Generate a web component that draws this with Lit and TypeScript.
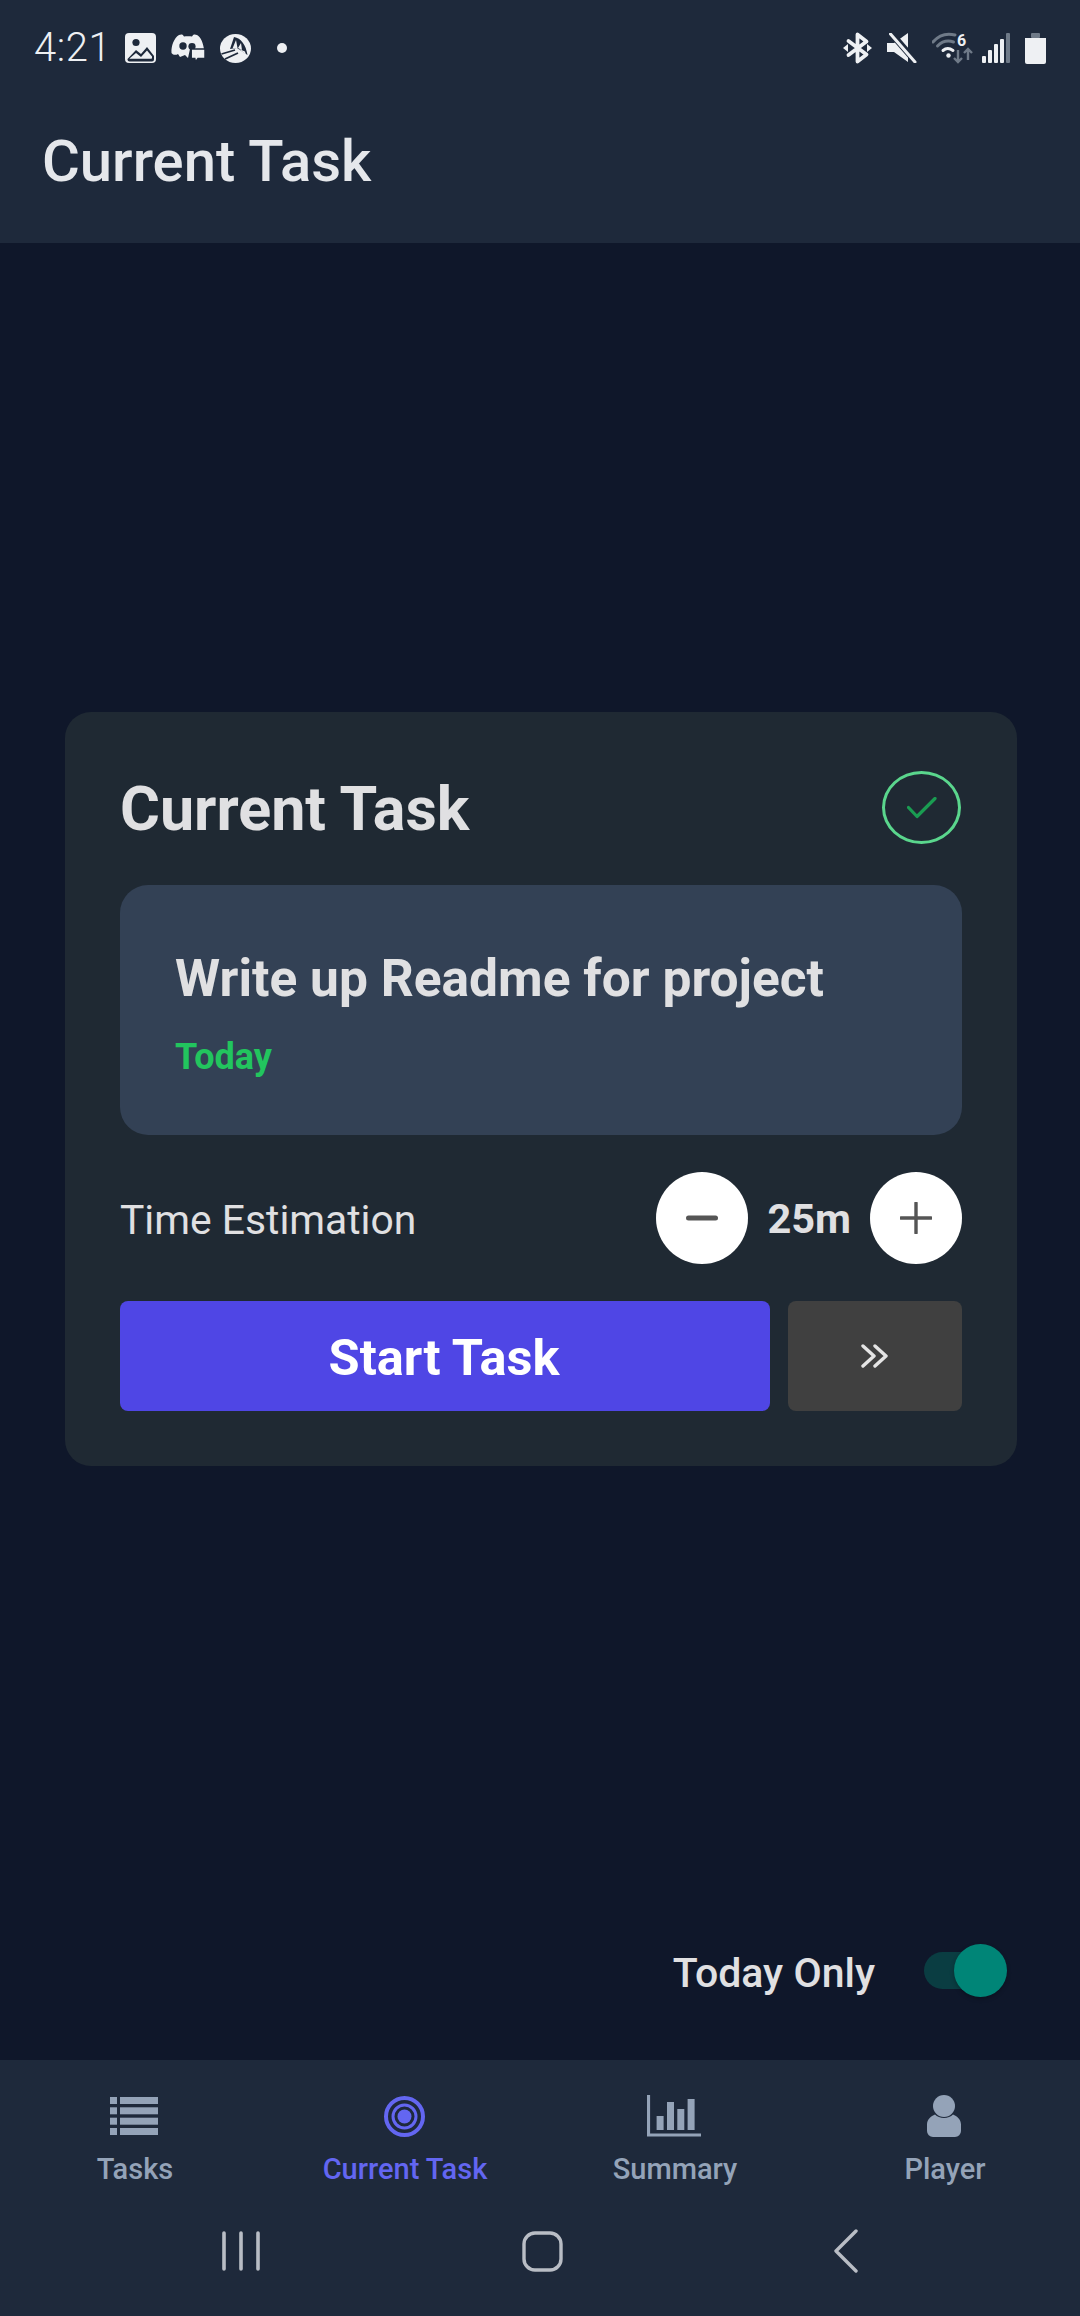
import { LitElement, html, css, svg } from "lit";
import { customElement } from "lit/decorators.js";

const icon = (w: number, h: number, body: unknown) =>
  html`<svg width=${w} height=${h} viewBox="0 0 ${w} ${h}" aria-hidden="true">${body}</svg>`;

const W = "#eef0f3";
const G = "#6f7a88";
const BG = "#1e293b";
const NAV = "#94a3b8";
const SYS = "#b9bdc5";

const ICONS = {
  image: icon(31, 30, svg`<rect width="31" height="30" rx="4" fill=${W}/><path d="M2.500 26 11 17l5 4 6-7 7 9v3.500a2 2 0 0 1-2 2H4.500a2 2 0 0 1-2-2Z" fill=${BG}/><path d="M4.500 25.500 11 20l5 4 6-6.500 5 6v1.500a.8.8 0 0 1-.8.8H5.300a.8.8 0 0 1-.8-.8Z" fill=${W}/><circle cx="11" cy="9.500" r="3.600" fill=${BG}/>`),
  discord: icon(34, 29, svg`<path d="M8 1c2-1 4-1 5 1.500 2-.5 6-.5 8 0C22 0 24 0 26 1c4 2 6 8 7 14H19l-2 9-3-3-5 2-2-3c-3 2-6 0-6.500-1C0 12 3 4 8 1Z" fill=${W}/><circle cx="12" cy="12" r="3.700" fill=${BG}/><ellipse cx="21" cy="12.500" rx="3.600" ry="3.400" fill=${BG}/><path d="M21 15h12.500a.8.8 0 0 1 .5.8v8a.8.8 0 0 1-.8.8H27l-2.500 3.400-.7-3.400H21a.8.8 0 0 1-.8-.8v-8a.8.8 0 0 1 .8-.8Z" fill=${W} stroke=${BG} stroke-width="1.500"/>`),
  sync: icon(31, 29, svg`<ellipse cx="15.500" cy="14.500" rx="15.500" ry="14.500" fill=${W}/><path d="M10 15 14 3C21 4 26 11 27.500 21L17 14Z" fill=${BG}/><path d="M12.500 14.500 16 6l1.500 8ZM18 14 21 9l1 7ZM19 15l6 2.500 .8 3Z" fill=${W}/><path d="M1.500 20 15 16M5 25l13-6" stroke=${BG} stroke-width="1.800"/>`),
  bluetooth: icon(29, 32, svg`<path d="M14.500 16V2.500l9 7L5.500 23M14.500 16v13.500l9-7L5.500 9" fill="none" stroke=${W} stroke-width="3.800" stroke-linejoin="round" stroke-linecap="round"/><path d="M0 16l5-4v8ZM29 16l-5-4v8Z" fill=${W}/>`),
  mute: icon(30, 30, svg`<path d="M0 10h7L21 0v29L7 19H0Z" fill=${W}/><path d="M3 -1 30 30" stroke=${BG} stroke-width="6.500"/><path d="M3.500 1 28 29" stroke=${W} stroke-width="3" stroke-linecap="round"/>`),
  wifi: icon(42, 32, svg`<path d="M1 10C7 3 15 1 23 3" fill="none" stroke=${G} stroke-width="3" stroke-linecap="round"/><path d="M5.500 14c4-4 10-6 16-4" fill="none" stroke=${G} stroke-width="3" stroke-linecap="round"/><path d="M11 18.500c3-2.500 6.500-2.500 10 0" fill="none" stroke=${W} stroke-width="3" stroke-linecap="round"/><circle cx="16.500" cy="23.500" r="2.200" fill=${W}/><text x="25" y="14" font-family="Roboto" font-weight="700" font-size="16" fill=${W}>6</text><path d="M26 18v12M22 26l4 4 4-4" fill="none" stroke=${G} stroke-width="2.400"/><path d="M36 28V17M32 21l4-4 4 4" fill="none" stroke=${G} stroke-width="2.400"/>`),
  signal: icon(28, 30, svg`<rect x="0" y="23" width="4" height="7" rx="1" fill=${W}/><rect x="6" y="17" width="4" height="13" rx="1" fill=${W}/><rect x="12" y="11" width="4" height="19" rx="1" fill=${W}/><rect x="18" y="6" width="4" height="24" rx="1" fill=${W}/><rect x="24" y="0" width="4" height="30" rx="1" fill=${G}/>`),
  battery: icon(21, 31, svg`<rect x="6" y="0" width="9" height="5" rx="1" fill=${G}/><path d="M0 5h21v24a2 2 0 0 1-2 2H2a2 2 0 0 1-2-2Z" fill=${W}/>`),
  check: icon(30, 22, svg`<path d="M1.500 10.500 10 19.500 28 1.500" fill="none" stroke="#1a9c52" stroke-width="3.200" stroke-linecap="round" stroke-linejoin="round"/>`),
  minus: icon(32, 6, svg`<rect width="32" height="5" y=".5" rx="2.500" fill="#555"/>`),
  plus: icon(32, 32, svg`<path d="M16 1v30M1 16h30" stroke="#555" stroke-width="3.400" stroke-linecap="round"/>`),
  skip: icon(28, 24, svg`<path d="M2 2l11 10L2 22M14 2l11 10-11 10" fill="none" stroke="#e5e5e5" stroke-width="3.400" stroke-linecap="round" stroke-linejoin="round"/>`),
  tasks: icon(48, 38, svg`${[0, 10.3, 20.7, 31].map((y) => svg`<rect x="0" y=${y} width="7" height="7" fill=${NAV}/><rect x="10" y=${y} width="38" height="7" fill=${NAV}/>`)}`),
  target: icon(41, 41, svg`<circle cx="20.500" cy="20.500" r="18.500" fill="none" stroke="#6366f1" stroke-width="4"/><circle cx="20.500" cy="20.500" r="7" fill="#6366f1"/><circle cx="20.500" cy="20.500" r="11.500" fill="none" stroke="#6366f1" stroke-width="3"/>`),
  summary: icon(54, 42, svg`<path d="M1.500 0v40H54" fill="none" stroke=${NAV} stroke-width="3.200"/><rect x="9.600" y="21" width="7" height="14" fill=${NAV}/><rect x="20" y="7" width="7" height="28" fill=${NAV}/><rect x="30.300" y="14" width="7" height="21" fill=${NAV}/><rect x="40.600" y="4" width="7" height="31" fill=${NAV}/>`),
  player: icon(34, 42, svg`<circle cx="17" cy="11" r="11" fill=${NAV}/><path d="M8 19.500c4 4.500 14 4.500 18 0 4 1.500 8 5 8 10V36a6 6 0 0 1-6 6H6a6 6 0 0 1-6-6v-6.500c0-5 4-8.500 8-10Z" fill=${NAV}/>`),
  recents: icon(38, 40, svg`<path d="M2 2v36M19 2v36M36 2v36" stroke=${SYS} stroke-width="3.600" stroke-linecap="round"/>`),
  home: icon(41, 41, svg`<rect x="2" y="2" width="37" height="37" rx="11" fill="none" stroke=${SYS} stroke-width="3.400"/>`),
  back: icon(24, 44, svg`<path d="M22 2 2 22l20 20" fill="none" stroke=${SYS} stroke-width="3.400" stroke-linecap="round" stroke-linejoin="round"/>`),
};

const NAV_ITEMS = [
  { label: "Tasks", icon: ICONS.tasks, active: false },
  { label: "Current Task", icon: ICONS.target, active: true },
  { label: "Summary", icon: ICONS.summary, active: false },
  { label: "Player", icon: ICONS.player, active: false },
];

@customElement("app-root")
export class AppRoot extends LitElement {
  static styles = css`
    :host {
      display: flex;
      flex-direction: column;
      width: 1080px;
      height: 2316px;
      background: #0f172a;
      color: #e0e0e2;
      font-family: Roboto, "Liberation Sans", sans-serif;
      overflow: hidden;
    }
    .top {
      height: 243px;
      flex: none;
      background: #1e293b;
      box-sizing: border-box;
    }
    .status {
      height: 96px;
      display: flex;
      align-items: center;
      justify-content: space-between;
      padding: 0 34px;
      box-sizing: border-box;
      color: #eef0f3;
    }
    .status .group { display: flex; align-items: center; }
    .time { font-size: 40px; font-weight: 300; letter-spacing: 0.6px; line-height: 44px; margin-right: 13.5px; }
    .sl1 { margin-right: 15px; }
    .sl2 { margin-right: 15px; }
    .dot { width: 10px; height: 10px; border-radius: 50%; background: #eef0f3; margin-left: 26px; }
    .sr1 { margin-right: 15px; }
    .sr2 { margin-right: 15px; }
    .sr3 { margin-right: 8px; }
    .sr4 { margin-right: 15px; }
    h1 {
      margin: 0;
      padding: 33px 0 0 42px;
      font-size: 58px;
      line-height: 64px;
      font-weight: 500;
      color: #e5e7eb;
    }
    .content {
      flex: 1;
      display: flex;
      align-items: center;
      justify-content: center;
      padding-left: 2px;
    }
    .card {
      width: 952px;
      box-sizing: border-box;
      background: #1f2933;
      border-radius: 26px;
      padding: 55px;
      display: flex;
      flex-direction: column;
      gap: 37px;
    }
    .card-head {
      height: 81px;
      display: flex;
      align-items: center;
      justify-content: space-between;
    }
    h2 { margin: 3px 0 0; font-size: 61px; line-height: 70px; font-weight: 700; color: #e0e0e2; }
    .done {
      width: 79px;
      height: 73px;
      margin-right: 1px;
      box-sizing: border-box;
      border: 3px solid #5ad68d;
      border-radius: 50%;
      display: flex;
      align-items: center;
      justify-content: center;
    }
    .task {
      height: 250px;
      box-sizing: border-box;
      background: #334155;
      border-radius: 28px;
      padding: 66px 55px 0;
    }
    .task-title { font-size: 51.5px; line-height: 56px; font-weight: 700; color: #e0e0e2; }
    .task-date { margin-top: 29px; font-size: 36px; line-height: 42px; font-weight: 700; color: #22c55e; }
    .time-row { display: flex; align-items: center; justify-content: space-between; height: 92px; }
    .time-label { margin-top: 4px; font-size: 40.8px; line-height: 48px; color: #e0e0e2; }
    .stepper { display: flex; align-items: center; gap: 19px; }
    .round {
      width: 92px;
      height: 92px;
      border-radius: 50%;
      background: #fff;
      display: flex;
      align-items: center;
      justify-content: center;
    }
    .amount { margin-top: 2px; font-size: 41.5px; line-height: 48px; font-weight: 700; color: #e0e0e2; }
    .actions { display: flex; gap: 18px; height: 110px; }
    .start {
      width: 650px;
      box-sizing: border-box;
      padding: 2px 2px 0 0;
      background: #4f46e5;
      border-radius: 8px;
      color: #fff;
      font-size: 50.5px;
      font-weight: 700;
      display: flex;
      align-items: center;
      justify-content: center;
    }
    .skip {
      flex: 1;
      background: #404040;
      border-radius: 8px;
      display: flex;
      align-items: center;
      justify-content: center;
    }
    .filter {
      height: 125px;
      flex: none;
      box-sizing: border-box;
      padding: 9px 73px 0 0;
      display: flex;
      justify-content: flex-end;
      align-items: flex-start;
      gap: 49px;
    }
    .filter-label { margin-top: 3px; font-size: 41px; line-height: 53px; font-weight: 500; color: #e0e0e2; }
    .switch { position: relative; width: 83px; height: 53px; }
    .track {
      position: absolute;
      left: 0;
      top: 8px;
      width: 76px;
      height: 37px;
      border-radius: 19px;
      background: #0a3d42;
    }
    .thumb {
      position: absolute;
      right: 0;
      top: 0;
      width: 53px;
      height: 53px;
      border-radius: 50%;
      background: #008577;
      box-shadow: 0 2px 4px rgba(0, 0, 0, 0.25);
    }
    .bottom {
      height: 256px;
      flex: none;
      background: #1e293b;
      box-sizing: border-box;
      padding-top: 35px;
    }
    .tabs { display: grid; grid-template-columns: repeat(4, 270px); }
    .tab { display: flex; flex-direction: column; align-items: center; color: #94a3b8; }
    .tab.active { color: #6366f1; }
    .tab-icon { height: 42px; display: flex; align-items: center; margin-right: 2px; }
    .tab-label { margin-top: 15px; font-size: 29px; line-height: 34px; font-weight: 500; white-space: nowrap; }
    .system {
      margin-top: 43px;
      display: grid;
      grid-template-columns: 222px 300px 312px 1fr;
      align-items: center;
      height: 44px;
    }
    .system svg { display: block; }
  `;

  render() {
    return html`
      <section class="top">
        <div class="status">
          <div class="group">
            <span class="time">4:21</span>
            <span class="group sl1">${ICONS.image}</span>
            <span class="group sl2">${ICONS.discord}</span>
            ${ICONS.sync}
            <span class="dot"></span>
          </div>
          <div class="group">
            <span class="group sr1">${ICONS.bluetooth}</span>
            <span class="group sr2">${ICONS.mute}</span>
            <span class="group sr3">${ICONS.wifi}</span>
            <span class="group sr4">${ICONS.signal}</span>
            ${ICONS.battery}
          </div>
        </div>
        <h1>Current Task</h1>
      </section>
      <main class="content">
        <article class="card">
          <header class="card-head">
            <h2>Current Task</h2>
            <div class="done">${ICONS.check}</div>
          </header>
          <div class="task">
            <div class="task-title">Write up Readme for project</div>
            <div class="task-date">Today</div>
          </div>
          <div class="time-row">
            <span class="time-label">Time Estimation</span>
            <div class="stepper">
              <div class="round">${ICONS.minus}</div>
              <span class="amount">25m</span>
              <div class="round">${ICONS.plus}</div>
            </div>
          </div>
          <div class="actions">
            <div class="start">Start Task</div>
            <div class="skip">${ICONS.skip}</div>
          </div>
        </article>
      </main>
      <div class="filter">
        <span class="filter-label">Today Only</span>
        <div class="switch"><span class="track"></span><span class="thumb"></span></div>
      </div>
      <nav class="bottom">
        <div class="tabs">
          ${NAV_ITEMS.map(
            (t) => html`<div class="tab ${t.active ? "active" : ""}">
              <div class="tab-icon">${t.icon}</div>
              <div class="tab-label">${t.label}</div>
            </div>`
          )}
        </div>
        <div class="system">
          <span></span>
          ${ICONS.recents}${ICONS.home}${ICONS.back}
        </div>
      </nav>
    `;
  }
}
